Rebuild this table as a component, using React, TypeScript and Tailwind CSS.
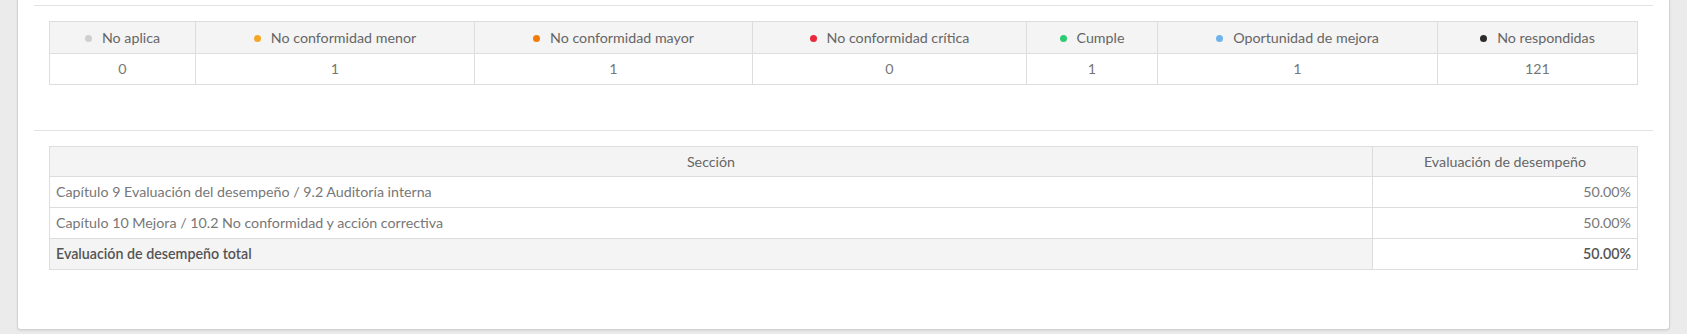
import React from "react";

type Estado = { label: string; dot: string; count: number; width: string };

const estados: Estado[] = [
  { label: "No aplica", dot: "bg-[#cfcfcf]", count: 0, width: "w-[146px]" },
  { label: "No conformidad menor", dot: "bg-[#f5a623]", count: 1, width: "w-[279px]" },
  { label: "No conformidad mayor", dot: "bg-[#f47b0a]", count: 1, width: "w-[278px]" },
  { label: "No conformidad crítica", dot: "bg-[#e9283a]", count: 0, width: "w-[274px]" },
  { label: "Cumple", dot: "bg-[#2ecc71]", count: 1, width: "w-[131px]" },
  { label: "Oportunidad de mejora", dot: "bg-[#6fb3ea]", count: 1, width: "w-[280px]" },
  { label: "No respondidas", dot: "bg-[#2b2b2b]", count: 121, width: "" },
];

const secciones = [
  { nombre: "Capítulo 9 Evaluación del desempeño / 9.2 Auditoría interna", valor: "50.00%" },
  { nombre: "Capítulo 10 Mejora / 10.2 No conformidad y acción correctiva", valor: "50.00%" },
];

const App = () => {
  return (
    <div className="h-[334px] overflow-hidden bg-[#ebebeb] px-[17px] font-['Lato','Open_Sans',sans-serif] text-[14.25px] leading-[20px]">
      <div className="bg-white border-x border-b border-[#d2d2d2] rounded-b-[4px] shadow-[0_1px_2px_rgba(0,0,0,0.08)] px-4 pt-[5px] pb-[59px]">
        <hr className="border-t border-[#e3e3e3]" />
        <div className="px-[15px]">
          <table className="w-full table-fixed border-collapse mt-[15px] text-center">
            <thead>
              <tr className="bg-[#f4f4f4]">
                {estados.map((e) => (
                  <th
                    key={e.label}
                    className={`${e.width} h-[32px] p-0 border border-[#dddddd] font-normal text-[#666666]`}
                  >
                    <span className="inline-flex items-center">
                      <span className={`inline-block w-[7px] h-[7px] rounded-full ${e.dot} mr-[10px]`} />
                      {e.label}
                    </span>
                  </th>
                ))}
              </tr>
            </thead>
            <tbody>
              <tr>
                {estados.map((e) => (
                  <td
                    key={e.label}
                    className="h-[31px] p-0 border border-[#dddddd] text-[#777777]"
                  >
                    {e.count}
                  </td>
                ))}
              </tr>
            </tbody>
          </table>
        </div>
        <hr className="border-t border-[#e3e3e3] mt-[45px]" />
        <div className="px-[15px]">
          <table className="w-full border-collapse mt-[15px]">
            <thead>
              <tr className="bg-[#f4f4f4]">
                <th className="h-[30px] py-0 px-[6px] border border-[#dddddd] font-normal text-[#666666] text-center">
                  Sección
                </th>
                <th className="w-[265px] h-[30px] py-0 px-[6px] border border-[#dddddd] font-normal text-[#666666] text-center">
                  Evaluación de desempeño
                </th>
              </tr>
            </thead>
            <tbody>
              {secciones.map((s) => (
                <tr key={s.nombre}>
                  <td className="h-[31px] py-0 px-[6px] border border-[#dddddd] text-[#777777] text-left">
                    {s.nombre}
                  </td>
                  <td className="h-[31px] py-0 px-[6px] border border-[#dddddd] text-[#777777] text-right">
                    {s.valor}
                  </td>
                </tr>
              ))}
              <tr>
                <td className="h-[31px] py-0 px-[6px] border border-[#dddddd] bg-[#f4f4f4] text-[#555555] font-semibold text-left">
                  Evaluación de desempeño total
                </td>
                <td className="h-[31px] py-0 px-[6px] border border-[#dddddd] text-[#555555] font-semibold text-right">
                  50.00%
                </td>
              </tr>
            </tbody>
          </table>
        </div>
      </div>
    </div>
  );
};

export default App;
